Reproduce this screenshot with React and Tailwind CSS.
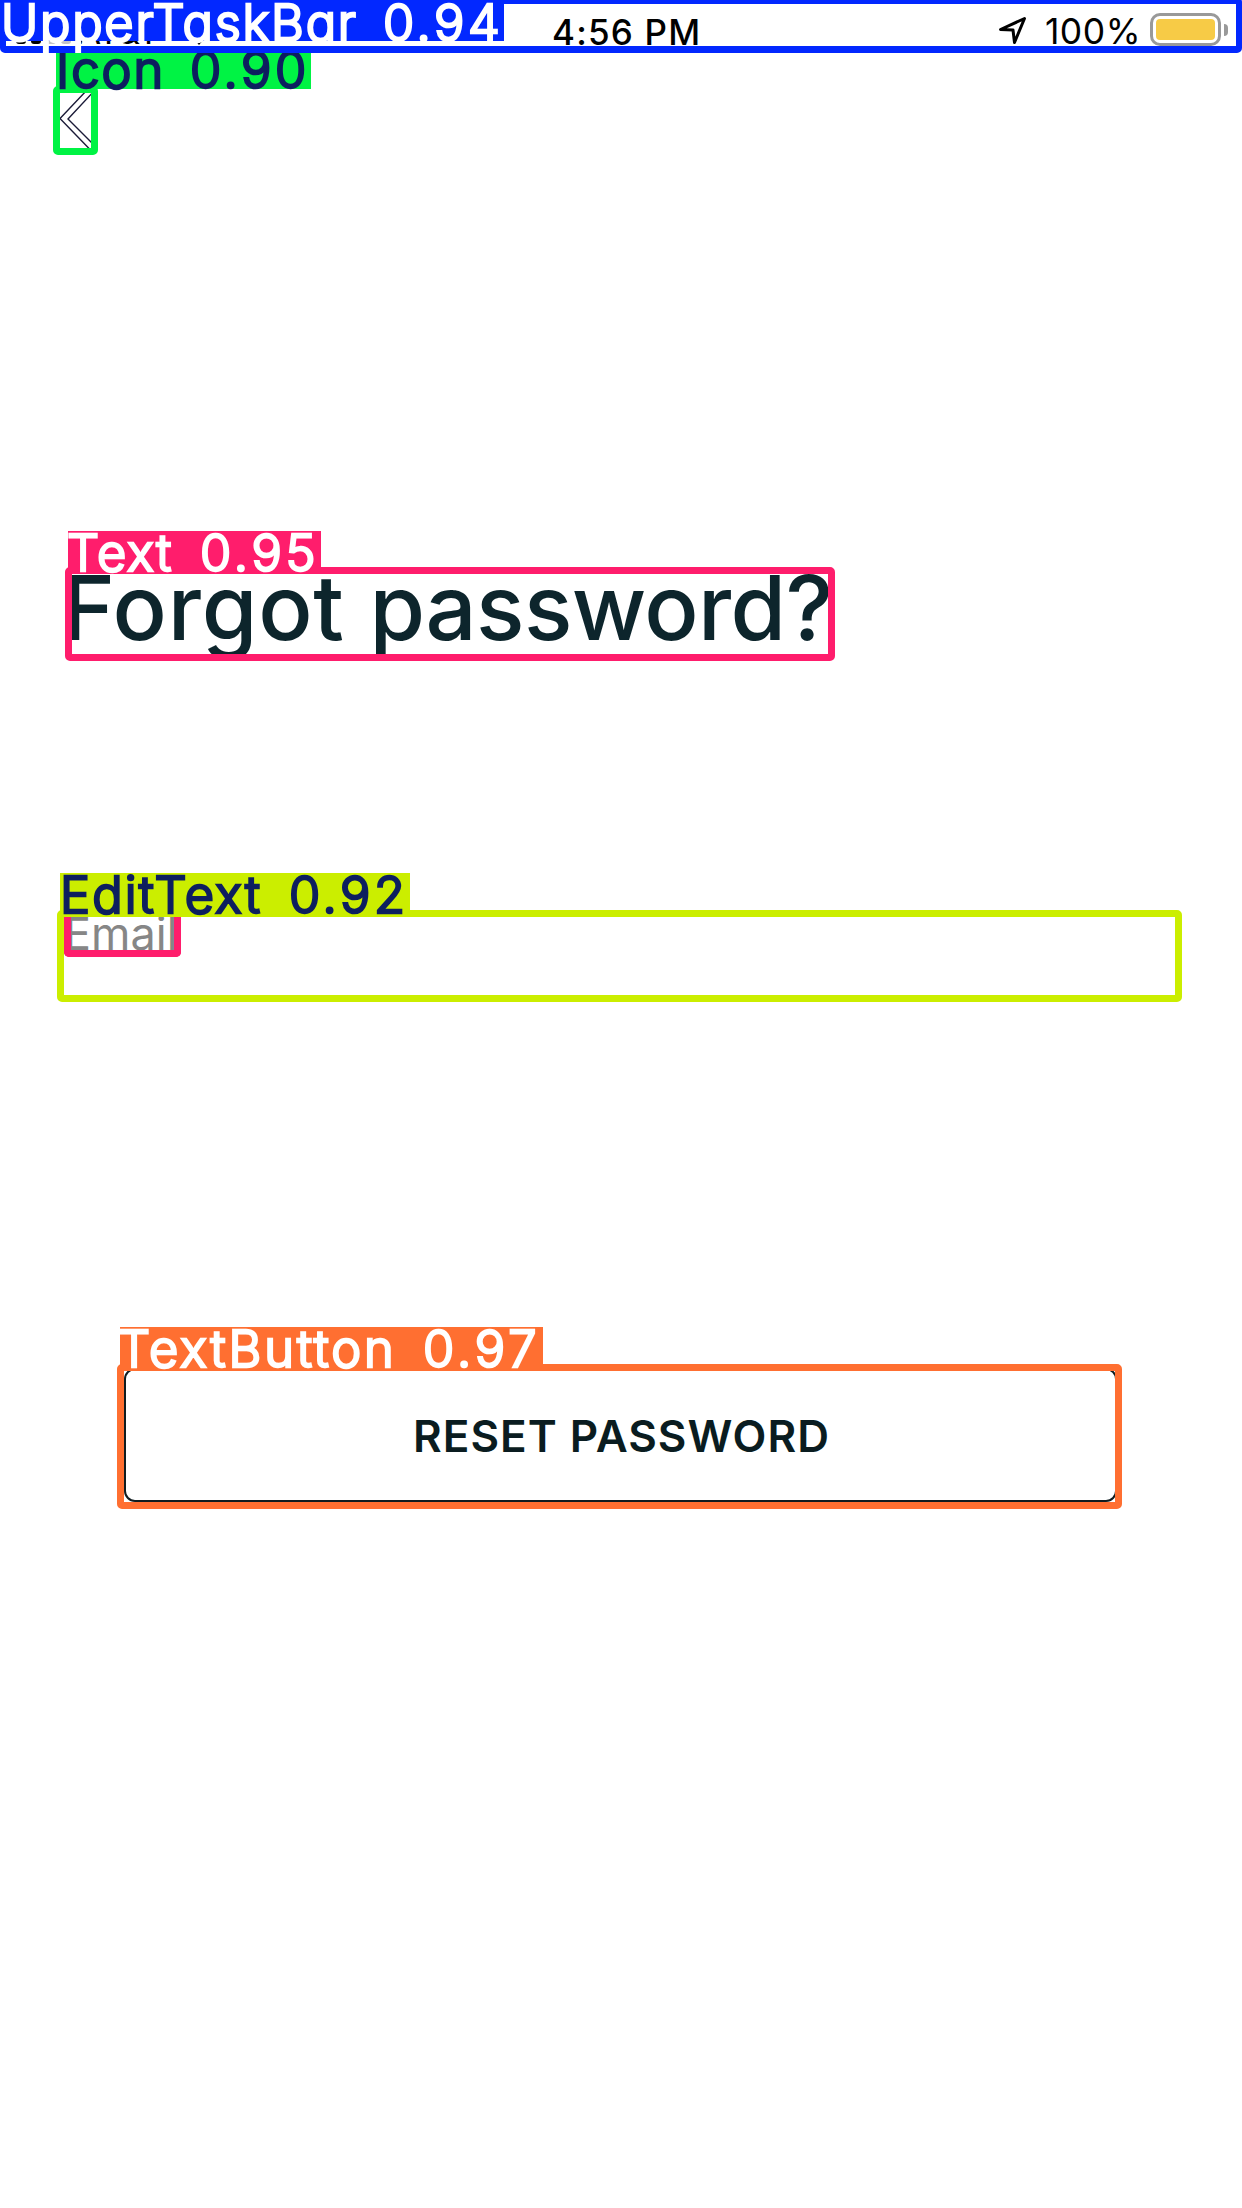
import React from "react";

const LABEL_TEXT =
  "absolute font-light whitespace-pre text-[50.5px] leading-[41px] [font-feature-settings:'cv11','calt'_0] [-webkit-text-stroke:2.5px_currentColor]";

function Label({ box, words }) {
  return (
    <div className={`absolute h-[41px] ${box}`}>
      {words.map((w) => (
        <span key={w.text} className={`${LABEL_TEXT} ${w.at}`}>
          {w.text}
        </span>
      ))}
    </div>
  );
}

function StatusBar() {
  return (
    <header className="flex h-[53px] items-start pr-[14px] pl-[16px]">
      <div className="flex w-[538px] items-start">
        <div className="flex h-[44px] items-end gap-[5px]">
          <div className="h-[9px] w-[10px] rounded-[3px] bg-black" />
          <div className="h-[14px] w-[10px] rounded-[3px] bg-black" />
          <div className="h-[20px] w-[10px] rounded-[3px] bg-[#c4c4c8]" />
          <div className="h-[26px] w-[10px] rounded-[3px] bg-[#c4c4c8]" />
        </div>
        <span className="ml-[6px] pt-[10px] text-[35px] leading-[42px] tracking-[-1px]">AT&amp;T</span>
        <svg className="mt-[18px] ml-[22px] h-[27px] w-[36px]" viewBox="0 0 36 27">
          <path d="M18 27 12 20Q18 15 24 20ZM9 17 6 13Q18 4 30 13L27 17Q18 9 9 17ZM3 10 0 6Q18-6 36 6L33 10Q18-1 3 10Z" />
        </svg>
      </div>
      <div className="w-[180px] -ml-[2px] pt-[10.5px] text-[35px] font-medium leading-[42px] tracking-[1.2px] whitespace-nowrap">4:56 PM</div>
      <div className="flex flex-1 items-start justify-end">
        <svg className="mt-[16px] mr-[17px] h-[30px] w-[30px]" viewBox="0 0 30 30" fill="none" stroke="#000" strokeWidth="3" strokeLinejoin="round">
          <path d="M2.5 13.5 26.500 2.5 16.500 26.500 15 14Z" />
        </svg>
        <span className="pt-[10.5px] text-[35.500px] font-normal leading-[42px] tracking-[0.5px]">100%</span>
        <div className="ml-[9px] mt-[13px] h-[33px] w-[71px] rounded-[10px] border-[3px] border-[#999] p-[3px]">
          <div className="h-full w-full rounded-[4px] bg-[#f7cb46]" />
        </div>
        <div className="ml-[3px] mt-[24px] h-[12px] w-[4px] rounded-r-full bg-[#999]" />
      </div>
    </header>
  );
}

export default function App() {
  return (
    <div className="relative h-[2208px] w-[1242px] overflow-hidden bg-white font-['Inter',sans-serif] text-black">
      <StatusBar />
      <main className="flex flex-col">
        <svg className="mt-[37px] ml-[59px] h-[60px] w-[33px]" viewBox="59 90 33 60" fill="none" stroke="#1b1b38" strokeWidth="1.400">
          <path d="M87 90 60 118.500 90 149.500M95 90 68 119 95 146" />
        </svg>
        <h1 className="mt-[404px] ml-[62px] text-[90px] font-medium leading-[108px] whitespace-nowrap text-[#0d252c]">
          <span className="tracking-[0.8px]">Forgot </span>
          <span className="tracking-[-0.6px]">password?</span>
        </h1>
        <div className="mt-[245px] ml-[64px] text-[45px] leading-[54px] text-[#868686]">Email</div>
        <button className="mt-[407px] ml-[124px] h-[134px] w-[993px] rounded-[11px] border-[2px] border-[#101c20] pt-[2px] pl-[2px] text-[44px] font-semibold leading-[54px] tracking-[1px] text-[#0a1c20]">RESET PASSWORD</button>
      </main>

      <div className="absolute top-[86px] left-[53px] h-[69px] w-[45px] rounded-[5px] border-[7px] border-[#00f344]" />
      <Label box="top-[48px] left-[56px] w-[255px] bg-[#00f344] text-[#0d1f5f]" words={[{ text: "Icon", at: "top-px left-0 tracking-[2px]" }, { text: "0.90", at: "top-px left-[134px] tracking-[3.6px]" }]} />

      <div className="absolute top-[-3px] left-0 h-[56px] w-[1242px] rounded-[5px] border-x-[6px] border-y-[7px] border-[#0228ff]" />
      <Label box="top-0 left-0 w-[504px] bg-[#0228ff] text-white" words={[{ text: "UpperTaskBar", at: "top-[2px] left-px tracking-[1.8px]" }, { text: "0.94", at: "top-[2px] left-[383px] tracking-[3.6px]" }]} />

      <div className="absolute top-[567px] left-[65px] h-[94px] w-[770px] rounded-[5px] border-[7px] border-[#ff1d6c]" />
      <Label box="top-[531px] left-[68px] w-[253px] bg-[#ff1d6c] text-white" words={[{ text: "Text", at: "top-px left-[-1px] tracking-[1.8px]" }, { text: "0.95", at: "top-px left-[132px] tracking-[3.8px]" }]} />

      <div className="absolute top-[915px] left-[64px] h-[42px] w-[117px] rounded-b-[5px] border-x-[7px] border-b-[7px] border-[#ff1d6c]" />
      <div className="absolute top-[910px] left-[57px] h-[92px] w-[1125px] rounded-[5px] border-[7px] border-[#cbee00]" />
      <Label box="top-[873px] left-[60px] w-[350px] bg-[#cbee00] text-[#0d1f5f]" words={[{ text: "EditText", at: "top-px left-0 tracking-[2.2px]" }, { text: "0.92", at: "top-px left-[229px] tracking-[3.6px]" }]} />

      <div className="absolute top-[1364px] left-[117px] h-[145px] w-[1005px] rounded-[5px] border-[7px] border-[#ff6f31]" />
      <Label box="top-[1327px] left-[120px] w-[423px] bg-[#ff6f31] text-white" words={[{ text: "TextButton", at: "top-px left-[-2px] tracking-[2.9px]" }, { text: "0.97", at: "top-px left-[303px] tracking-[4px]" }]} />
    </div>
  );
}
